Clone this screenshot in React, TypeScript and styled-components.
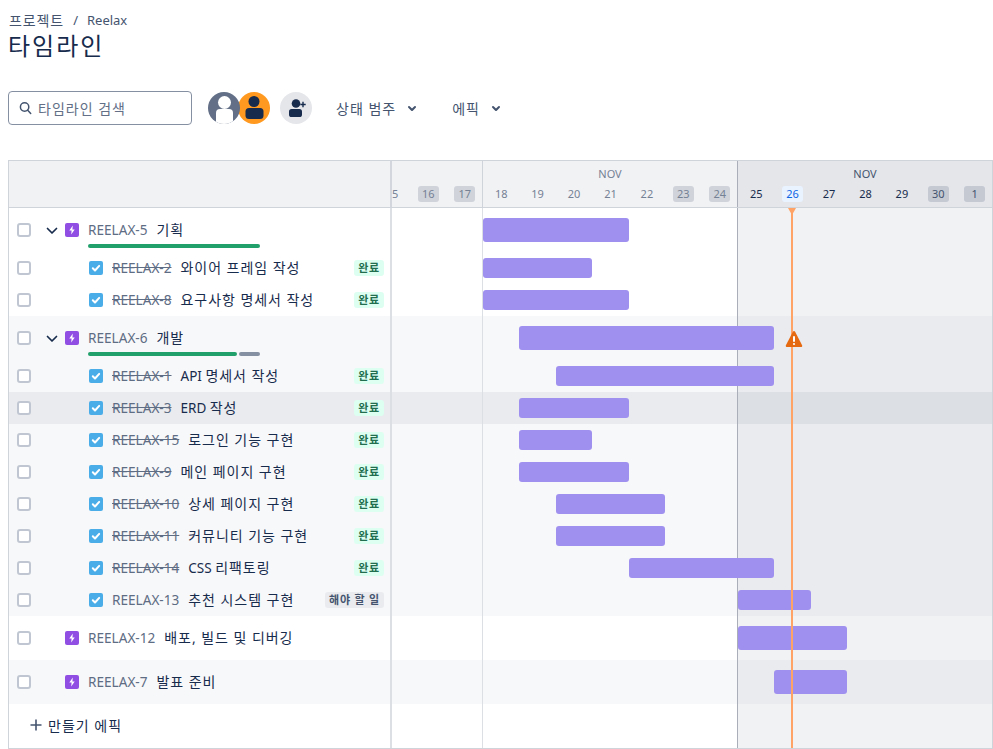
import React from "react";
import styled, { createGlobalStyle } from "styled-components";

const GlobalStyle = createGlobalStyle`
  * {
    box-sizing: border-box;
  }

  html,
  body {
    margin: 0;
    background: #ffffff;
    overflow: hidden;
  }

  body {
    font-family: "Noto Sans", "Noto Sans CJK KR", sans-serif;
    font-size: 14px;
    color: #172b4d;
  }
`;

const Page = styled.div`
  width: 993px;
  height: 749px;
  padding: 10px 0 0 8px;
  overflow: hidden;
`;

const Breadcrumb = styled.div`
  display: flex;
  align-items: center;
  height: 20px;
  padding: 0 0 1px 1px;
  color: #44546f;
  font-size: 13px;
`;

const Crumb = styled.span`
  font-size: 14px;
  letter-spacing: 0.9px;
`;

const Slash = styled.span`
  margin: 0 9px 0 9px;
`;

const Title = styled.h1`
  margin: 0;
  height: 32px;
  font-size: 24px;
  line-height: 32px;
  font-weight: 400;
  letter-spacing: 2px;
  color: #172b4d;
`;

const Toolbar = styled.div`
  display: flex;
  align-items: center;
  height: 34px;
  margin-top: 29px;
`;

const Search = styled.div`
  display: flex;
  align-items: center;
  gap: 6px;
  width: 184px;
  height: 34px;
  padding-left: 10px;
  border: 1px solid #8590a2;
  border-radius: 4px;
  color: #626f86;
  letter-spacing: 1px;
`;

const Avatars = styled.div`
  display: flex;
  margin-left: 16px;
`;

const Avatar = styled.div<{ $bg: string; $front?: boolean }>`
  position: relative;
  z-index: ${(p) => (p.$front ? 1 : 0)};
  width: 32px;
  height: 32px;
  border-radius: 50%;
  overflow: hidden;
  background: ${(p) => p.$bg};
  margin-left: ${(p) => (p.$front ? "0" : "-2px")};
`;

const AddPerson = styled.div`
  display: flex;
  align-items: center;
  justify-content: center;
  width: 32px;
  height: 32px;
  margin-left: 10px;
  border-radius: 50%;
  background: #e4e6ea;
`;

const FilterButton = styled.div<{ $left: number; $gap: number }>`
  display: flex;
  align-items: center;
  gap: ${(p) => p.$gap}px;
  margin-left: ${(p) => p.$left}px;
  color: #44546f;
  letter-spacing: 1px;
`;

const Table = styled.div`
  position: relative;
  width: 985px;
  margin-top: 35px;
  border: 1px solid #cfd3da;
  overflow: hidden;
`;

const HeaderRow = styled.div`
  display: flex;
  height: 47px;
  background: #f1f2f4;
  border-bottom: 1px solid #cfd3da;
`;

const Side = styled.div<{ $epic?: boolean }>`
  flex: 0 0 383px;
  width: 383px;
  height: 100%;
  padding: ${(p) => (p.$epic ? "12px" : "6px")} 6px 0 8px;
  border-right: 2px solid #dcdfe4;
`;

const HeaderSide = styled.div`
  flex: 0 0 383px;
  border-right: 2px solid #d3d6dc;
`;

const Section = styled.div<{ $width?: number; $now?: boolean; $first?: boolean }>`
  flex: ${(p) => (p.$width ? `0 0 ${p.$width}px` : "1")};
  display: flex;
  flex-direction: column;
  align-items: ${(p) => (p.$first ? "flex-end" : "stretch")};
  overflow: hidden;
  border-left: ${(p) => (p.$first ? "none" : `1px solid ${p.$now ? "#a9aeb8" : "#cfd3da"}`)};
  background: ${(p) => (p.$now ? "#e4e6ea" : "transparent")};
`;

const Month = styled.div<{ $now?: boolean }>`
  height: 25px;
  padding-top: 5px;
  text-align: center;
  font-size: 11px;
  line-height: 15px;
  color: ${(p) => (p.$now ? "#44546f" : "#758195")};
`;

const Days = styled.div<{ $first?: boolean }>`
  display: flex;
  flex: none;
  margin-right: ${(p) => (p.$first ? "-1px" : "0")};
`;

const Day = styled.div<{ $kind?: "off" | "nowOff" | "today"; $now?: boolean }>`
  flex: 0 0 36.43px;
  display: flex;
  justify-content: center;
  font-size: 11px;

  span {
    display: block;
    width: 21px;
    height: 16px;
    line-height: 16px;
    text-align: center;
    border-radius: 3px;
    color: ${(p) =>
      p.$kind === "today"
        ? "#0c66e4"
        : p.$kind === "nowOff"
          ? "#44546f"
          : p.$now
            ? "#172b4d"
            : "#758195"};
    background: ${(p) =>
      p.$kind === "today"
        ? "#e9f2ff"
        : p.$kind === "nowOff"
          ? "#c4c9d2"
          : p.$kind === "off"
            ? "#d0d4da"
            : "transparent"};
  }
`;

const Row = styled.div<{ $height: number; $bg: string }>`
  display: flex;
  height: ${(p) => p.$height}px;
  background: ${(p) => p.$bg};
`;

const Head = styled.div`
  display: flex;
  align-items: center;
  height: 20px;
`;

const Tick = styled.span`
  flex: none;
  width: 14px;
  height: 14px;
  background: #ffffff;
  border: 2px solid #c1c7d2;
  border-radius: 3px;
`;

const Caret = styled.span`
  flex: none;
  display: flex;
  justify-content: flex-end;
  width: 34px;
  padding: 2px 7px 0 0;
`;

const Spacer = styled.span`
  flex: none;
  width: 34px;
`;

const IssueIcon = styled.span<{ $color: string; $child?: boolean }>`
  flex: none;
  display: flex;
  align-items: center;
  justify-content: center;
  width: 14px;
  height: 14px;
  margin-left: ${(p) => (p.$child ? "24px" : "0")};
  border-radius: 2px;
  background: ${(p) => p.$color};
`;

const Key = styled.span<{ $done?: boolean }>`
  flex: none;
  margin: 0 0 2px 9px;
  color: #5e6c84;
  font-size: 13.6px;
  text-decoration: ${(p) => (p.$done ? "line-through" : "none")};
`;

const Summary = styled.span`
  flex: none;
  margin: 0 0 2px 9px;
  color: #172b4d;
  font-size: 14px;
  letter-spacing: 0.95px;
`;

const Latin = styled.span`
  font-size: 13.5px;
  letter-spacing: 0;
`;

const Lozenge = styled.span<{ $done?: boolean }>`
  flex: none;
  margin-left: auto;
  height: 16px;
  padding: 0 4px;
  border-radius: 3px;
  font-size: 11px;
  line-height: 16px;
  font-weight: 700;
  letter-spacing: 0.8px;
  color: ${(p) => (p.$done ? "#216e4e" : "#44546f")};
  background: ${(p) => (p.$done ? "#dcfff1" : "#e9ebee")};
`;

const Progress = styled.div`
  display: flex;
  gap: 2px;
  width: 172px;
  height: 4px;
  margin: 4px 0 0 71px;
`;

const ProgressPart = styled.div<{ $color: string; $grow: number }>`
  flex: ${(p) => p.$grow};
  background: ${(p) => p.$color};
  border-radius: 2px;
`;

const Track = styled.div`
  position: relative;
  flex: 1;
  display: flex;
`;

const Cell = styled.div<{ $width?: number; $now?: boolean; $first?: boolean }>`
  flex: ${(p) => (p.$width ? `0 0 ${p.$width}px` : "1")};
  border-left: ${(p) => (p.$first ? "none" : `1px solid ${p.$now ? "#a9aeb8" : "#dcdfe4"}`)};
  background: ${(p) => (p.$now ? "rgba(9, 30, 66, 0.06)" : "transparent")};
`;

const Bar = styled.div<{ $from: number; $to: number; $epic?: boolean }>`
  position: absolute;
  left: ${(p) => p.$from - 392}px;
  top: ${(p) => (p.$epic ? 10 : 6)}px;
  width: ${(p) => p.$to - p.$from}px;
  height: ${(p) => (p.$epic ? 24 : 20)}px;
  background: #9f8fef;
  border-radius: 3px;
`;

const Warning = styled.svg`
  position: absolute;
  left: 393px;
  top: 14px;
  z-index: 3;
`;

const CreateRow = styled.div`
  display: flex;
  height: 44px;
`;

const CreateSide = styled(Side)`
  display: flex;
  align-items: center;
  gap: 5px;
  padding: 0 0 2px 20px;
  color: #172b4d;
  font-size: 14px;
  letter-spacing: 1px;
`;

const TodayLine = styled.div`
  position: absolute;
  left: 782px;
  top: 47px;
  bottom: 0;
  width: 2px;
  background: #ffa366;
  z-index: 2;

  &::before {
    content: "";
    position: absolute;
    left: -3px;
    top: 0;
    border-left: 4px solid transparent;
    border-right: 4px solid transparent;
    border-top: 7px solid #ffa366;
  }
`;

const ChevronDown = () => (
  <svg width="24" height="24" viewBox="0 0 24 24">
    <path
      fill="#44546f"
      d="M8.292 10.293a1.009 1.009 0 000 1.419l2.939 2.965c.218.215.5.322.779.322s.556-.107.769-.322l2.93-2.955a1.01 1.01 0 000-1.419.987.987 0 00-1.406 0l-2.298 2.317-2.307-2.327a.99.99 0 00-1.406 0z"
    />
  </svg>
);

const SearchIcon = () => (
  <svg width="13" height="14" viewBox="0 0 13 14" fill="none" stroke="#44546f" strokeWidth="1.5">
    <circle cx="5.6" cy="6" r="4.2" />
    <path d="M8.7 9.2l3 3.2" strokeLinecap="round" />
  </svg>
);

const PersonGrey = () => (
  <svg width="32" height="32" viewBox="0 0 32 32" fill="#ffffff">
    <circle cx="16.5" cy="10.5" r="6.5" />
    <rect x="8" y="17" width="17" height="18" rx="4" />
  </svg>
);

const PersonOrange = () => (
  <svg width="32" height="32" viewBox="0 0 32 32" fill="#172b4d">
    <circle cx="16" cy="9.5" r="5.5" />
    <rect x="7.5" y="16" width="18" height="11" rx="3.5" />
  </svg>
);

const PersonAdd = () => (
  <svg width="20" height="20" viewBox="0 0 20 20" fill="#172b4d">
    <circle cx="10" cy="5.5" r="4.3" />
    <rect x="3" y="11" width="13" height="8" rx="2.6" />
    <path d="M16.3 3.8h1.4v2h2v1.4h-2v2h-1.4v-2h-2V5.8h2z" />
  </svg>
);

const TreeChevron = () => (
  <svg width="12" height="8" viewBox="0 0 12 8" fill="none" stroke="#172b4d" strokeWidth="1.7">
    <path d="M1.5 1.5L6 6l4.5-4.5" strokeLinecap="round" strokeLinejoin="round" />
  </svg>
);

const Bolt = () => (
  <svg width="14" height="14" viewBox="0 0 14 14">
    <path fill="#ffffff" d="M7.8 2.6L4.3 7.5h2.3l-.4 3.9 3.5-4.9H7.4z" />
  </svg>
);

const Check = () => (
  <svg width="14" height="14" viewBox="0 0 14 14" fill="none" stroke="#ffffff" strokeWidth="2">
    <path d="M3.8 7.3l2.2 2.2 4.2-4.6" strokeLinecap="round" strokeLinejoin="round" />
  </svg>
);

const Plus = () => (
  <svg width="14" height="14" viewBox="0 0 14 14" stroke="#44546f" strokeWidth="1.6">
    <path d="M7 1.5v11M1.5 7h11" />
  </svg>
);

type DayKind = "off" | "nowOff" | "today";

type Issue = {
  id: string;
  title: string;
  latin?: string;
  epic?: boolean;
  done?: boolean;
  todo?: boolean;
  bar: [number, number];
  progress?: [number, number];
  bg: string;
  warning?: boolean;
};

const issues: Issue[] = [
  { id: "REELAX-5", title: "기획", epic: true, bar: [483, 629], progress: [1, 0], bg: "#ffffff" },
  { id: "REELAX-2", title: "와이어 프레임 작성", done: true, bar: [483, 592], bg: "#ffffff" },
  { id: "REELAX-8", title: "요구사항 명세서 작성", done: true, bar: [483, 629], bg: "#ffffff" },
  { id: "REELAX-6", title: "개발", epic: true, bar: [519, 774], progress: [149, 21], bg: "#f7f8f9", warning: true },
  { id: "REELAX-1", latin: "API ", title: "명세서 작성", done: true, bar: [556, 774], bg: "#f7f8f9" },
  { id: "REELAX-3", latin: "ERD ", title: "작성", done: true, bar: [519, 629], bg: "#e9ebee" },
  { id: "REELAX-15", title: "로그인 기능 구현", done: true, bar: [519, 592], bg: "#f7f8f9" },
  { id: "REELAX-9", title: "메인 페이지 구현", done: true, bar: [519, 629], bg: "#f7f8f9" },
  { id: "REELAX-10", title: "상세 페이지 구현", done: true, bar: [556, 665], bg: "#f7f8f9" },
  { id: "REELAX-11", title: "커뮤니티 기능 구현", done: true, bar: [556, 665], bg: "#f7f8f9" },
  { id: "REELAX-14", latin: "CSS ", title: "리팩토링", done: true, bar: [629, 774], bg: "#f7f8f9" },
  { id: "REELAX-13", title: "추천 시스템 구현", todo: true, bar: [738, 811], bg: "#f7f8f9" },
  { id: "REELAX-12", title: "배포, 빌드 및 디버깅", epic: true, bar: [738, 847], bg: "#ffffff" },
  { id: "REELAX-7", title: "발표 준비", epic: true, bar: [774, 847], bg: "#f7f8f9" },
];

const pastDays: [number, DayKind?][] = [
  [18],
  [19],
  [20],
  [21],
  [22],
  [23, "off"],
  [24, "off"],
];

const currentDays: [number, DayKind?][] = [
  [25],
  [26, "today"],
  [27],
  [28],
  [29],
  [30, "nowOff"],
  [1, "nowOff"],
];

const TimelineCells = () => (
  <>
    <Cell $width={90} $first />
    <Cell $width={255} />
    <Cell $now />
  </>
);

const IssueRow = ({ issue }: { issue: Issue }) => {
  const hasCaret = issue.epic && issue.progress;
  return (
    <Row $height={issue.epic ? 44 : 32} $bg={issue.bg}>
      <Side $epic={issue.epic}>
        <Head>
          <Tick />
          {hasCaret ? (
            <Caret>
              <TreeChevron />
            </Caret>
          ) : (
            <Spacer />
          )}
          {issue.epic ? (
            <IssueIcon $color="#904ee2">
              <Bolt />
            </IssueIcon>
          ) : (
            <IssueIcon $color="#4bade8" $child>
              <Check />
            </IssueIcon>
          )}
          <Key $done={issue.done}>{issue.id}</Key>
          <Summary>
            {issue.latin && <Latin>{issue.latin}</Latin>}
            {issue.title}
          </Summary>
          {issue.done && <Lozenge $done>완료</Lozenge>}
          {issue.todo && <Lozenge>해야 할 일</Lozenge>}
        </Head>
        {issue.progress && (
          <Progress>
            <ProgressPart $color="#22a06b" $grow={issue.progress[0]} />
            {issue.progress[1] > 0 && <ProgressPart $color="#8590a2" $grow={issue.progress[1]} />}
          </Progress>
        )}
      </Side>
      <Track>
        <TimelineCells />
        <Bar $from={issue.bar[0]} $to={issue.bar[1]} $epic={issue.epic} />
        {issue.warning && (
          <Warning width="18" height="18" viewBox="0 0 18 18">
            <path fill="#e56910" d="M7.9 1.7c.5-.9 1.7-.9 2.2 0l7 13.5c.4.9-.2 1.8-1.1 1.8H2c-.9 0-1.5-.9-1.1-1.8z" />
            <rect x="8" y="6" width="2" height="6" rx="1" fill="#ffffff" />
            <circle cx="9" cy="14" r="1.1" fill="#ffffff" />
          </Warning>
        )}
      </Track>
    </Row>
  );
};

const App = () => {
  return (
    <Page>
      <GlobalStyle />
      <Breadcrumb>
        <Crumb>프로젝트</Crumb>
        <Slash>/</Slash>
        <span>Reelax</span>
      </Breadcrumb>
      <Title>타임라인</Title>

      <Toolbar>
        <Search>
          <SearchIcon />
          타임라인 검색
        </Search>
        <Avatars>
          <Avatar $bg="#626f86" $front>
            <PersonGrey />
          </Avatar>
          <Avatar $bg="#ff991f">
            <PersonOrange />
          </Avatar>
        </Avatars>
        <AddPerson>
          <PersonAdd />
        </AddPerson>
        <FilterButton $left={24} $gap={4}>
          상태 범주
          <ChevronDown />
        </FilterButton>
        <FilterButton $left={28} $gap={4}>
          에픽
          <ChevronDown />
        </FilterButton>
      </Toolbar>

      <Table>
        <HeaderRow>
          <HeaderSide />
          <Section $width={90} $first>
            <Month />
            <Days $first>
              {[15, 16, 17].map((d) => (
                <Day key={d} $kind={d === 15 ? undefined : "off"}>
                  <span>{d}</span>
                </Day>
              ))}
            </Days>
          </Section>
          <Section $width={255}>
            <Month>NOV</Month>
            <Days>
              {pastDays.map(([d, kind]) => (
                <Day key={d} $kind={kind}>
                  <span>{d}</span>
                </Day>
              ))}
            </Days>
          </Section>
          <Section $now>
            <Month $now>NOV</Month>
            <Days>
              {currentDays.map(([d, kind]) => (
                <Day key={d} $kind={kind} $now>
                  <span>{d}</span>
                </Day>
              ))}
            </Days>
          </Section>
        </HeaderRow>

        {issues.map((issue) => (
          <IssueRow key={issue.id} issue={issue} />
        ))}

        <CreateRow>
          <CreateSide>
            <Plus />
            만들기 에픽
          </CreateSide>
          <Track>
            <TimelineCells />
          </Track>
        </CreateRow>

        <TodayLine />
      </Table>
    </Page>
  );
};

export default App;
